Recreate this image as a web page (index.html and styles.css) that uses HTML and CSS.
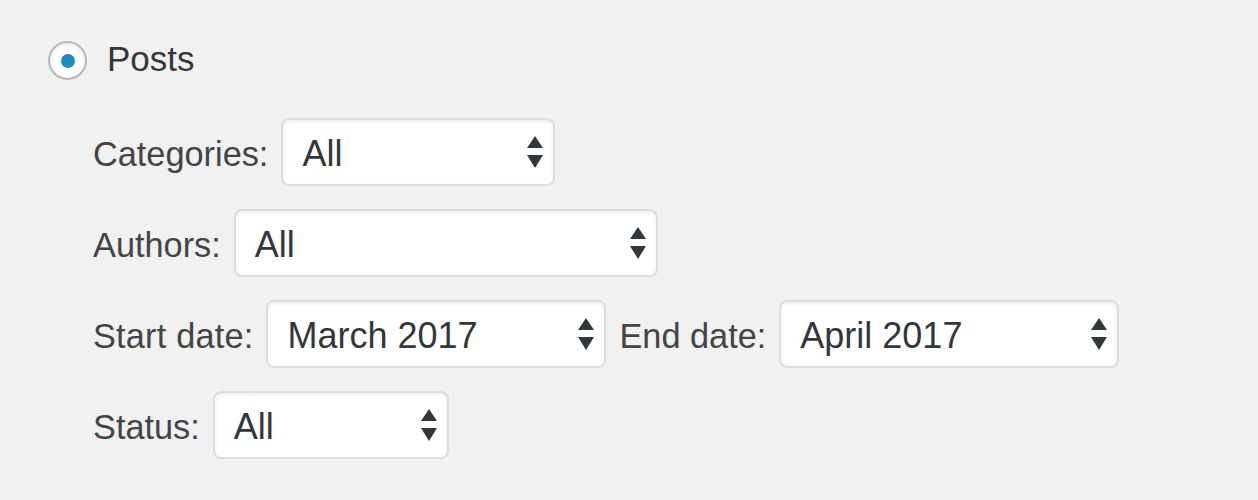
FILE: index.html
```html
<!DOCTYPE html>
<html lang="en">
<head>
<meta charset="utf-8">
<title>Export Posts</title>
<link rel="stylesheet" href="styles.css">
</head>
<body>
<div class="page">
  <label class="radio-row">
    <span class="radio"><span class="radio-dot"></span></span>
    <span class="radio-label">Posts</span>
  </label>
  <div class="fields">
    <div class="row">
      <span class="label">Categories:</span>
      <div class="select w-cat"><span class="value">All</span><svg class="arrows" width="16" height="32" viewBox="0 0 16 32"><polygon points="8,0 16,12 0,12"/><polygon points="0,19 16,19 8,32"/></svg></div>
    </div>
    <div class="row">
      <span class="label">Authors:</span>
      <div class="select w-auth"><span class="value">All</span><svg class="arrows" width="16" height="32" viewBox="0 0 16 32"><polygon points="8,0 16,12 0,12"/><polygon points="0,19 16,19 8,32"/></svg></div>
    </div>
    <div class="row">
      <span class="label label-wide">Start date:</span>
      <div class="select w-date"><span class="value">March 2017</span><svg class="arrows" width="16" height="32" viewBox="0 0 16 32"><polygon points="8,0 16,12 0,12"/><polygon points="0,19 16,19 8,32"/></svg></div>
      <span class="label">End date:</span>
      <div class="select w-date"><span class="value">April 2017</span><svg class="arrows" width="16" height="32" viewBox="0 0 16 32"><polygon points="8,0 16,12 0,12"/><polygon points="0,19 16,19 8,32"/></svg></div>
    </div>
    <div class="row">
      <span class="label">Status:</span>
      <div class="select w-status"><span class="value">All</span><svg class="arrows" width="16" height="32" viewBox="0 0 16 32"><polygon points="8,0 16,12 0,12"/><polygon points="0,19 16,19 8,32"/></svg></div>
    </div>
  </div>
</div>
</body>
</html>
```
FILE: styles.css
```css
html, body {
  margin: 0;
  padding: 0;
  background: #f1f1f1;
}
body {
  font-family: "Liberation Sans", Arial, sans-serif;
  color: #444;
}
.page {
  padding: 41px 0 0 48px;
}
.radio-row {
  display: flex;
  align-items: center;
  gap: 20px;
  height: 39px;
}
.radio {
  box-sizing: border-box;
  width: 39px;
  height: 39px;
  border: 2px solid #b4b9be;
  border-radius: 50%;
  background: #fff;
  box-shadow: inset 0 2px 4px rgba(0,0,0,0.08);
  display: flex;
  align-items: center;
  justify-content: center;
}
.radio-dot {
  width: 14px;
  height: 14px;
  border-radius: 50%;
  background: #1e8cbe;
}
.radio-label {
  font-size: 35px;
  line-height: 35px;
  color: #32373c;
  margin-bottom: 5px;
}
.fields {
  margin: 38px 0 0 45px;
  display: flex;
  flex-direction: column;
  gap: 23px;
}
.row {
  display: flex;
  align-items: baseline;
  gap: 13px;
}
.label {
  font-size: 34.3px;
  color: #444;
}
.label-wide {
  letter-spacing: 0.2px;
}
.select {
  box-sizing: border-box;
  height: 68px;
  border: 2px solid #ddd;
  border-radius: 8px;
  background: #fff;
  box-shadow: inset 0 2px 4px rgba(0,0,0,0.07);
  display: flex;
  align-items: center;
  justify-content: space-between;
  padding: 4px 10px 0 19px;
  color: #32373c;
}
.value {
  font-size: 36px;
}
.arrows {
  fill: #32373c;
  margin-bottom: 4px;
}
.w-cat { width: 274px; }
.w-auth { width: 424px; }
.w-date { width: 340px; }
.w-status { width: 236px; }
```
